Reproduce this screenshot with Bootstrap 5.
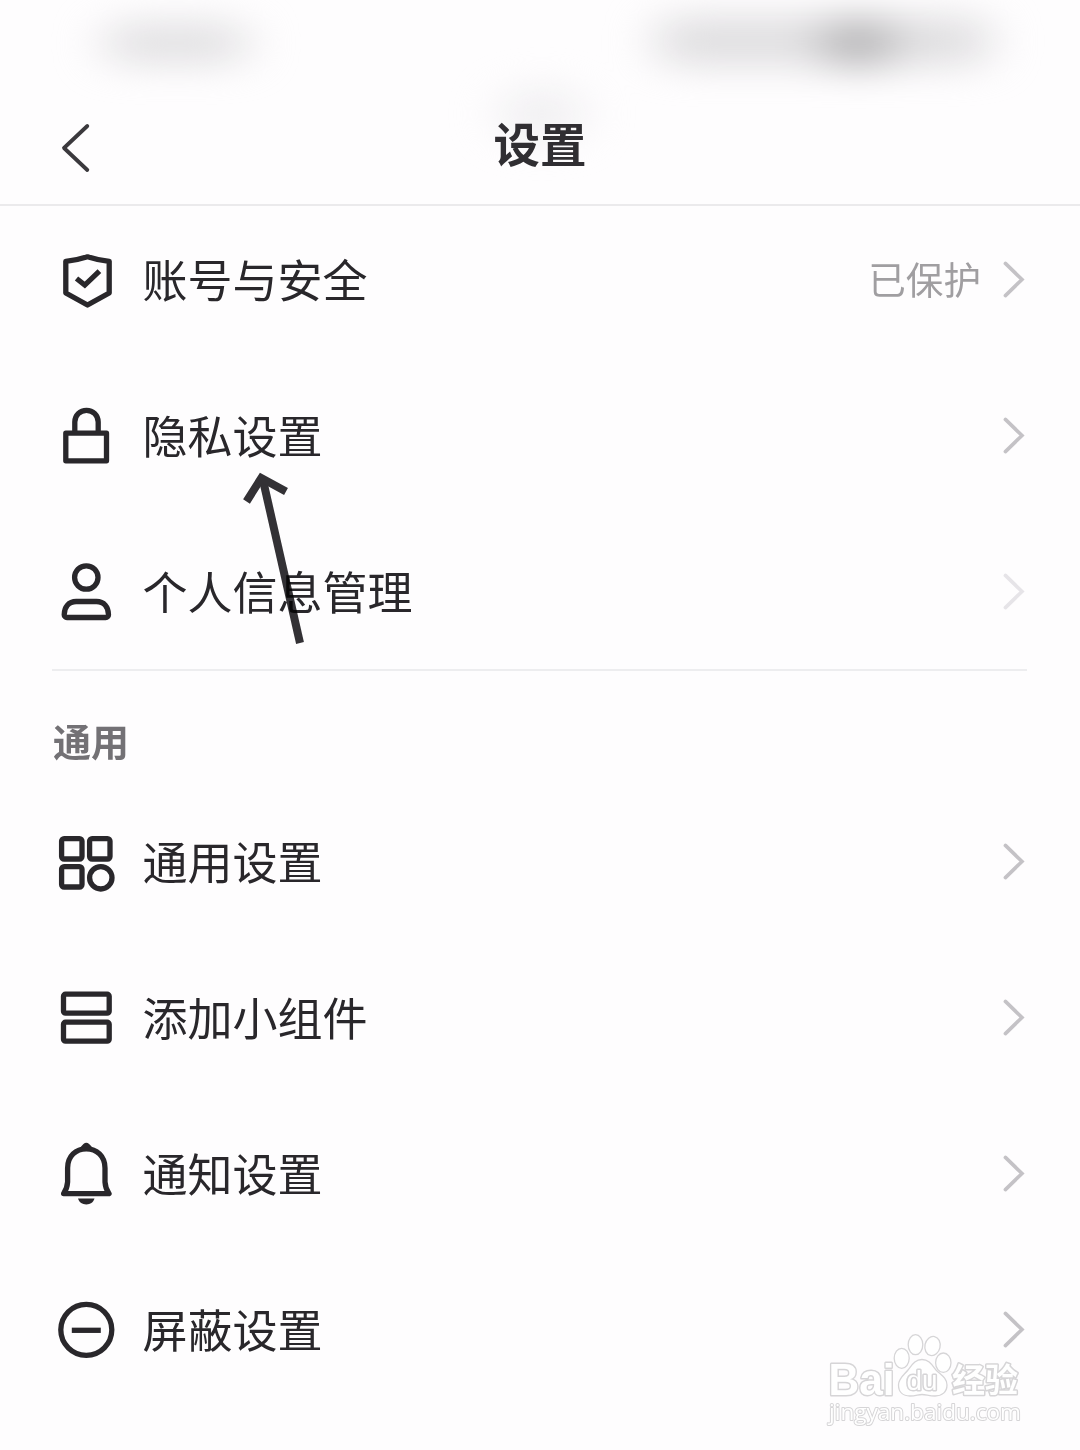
<!DOCTYPE html>
<html lang="zh-CN">
<head>
<meta charset="utf-8">
<meta name="viewport" content="width=device-width, initial-scale=1">
<title>设置</title>
<link rel="stylesheet" href="https://cdn.jsdelivr.net/npm/bootstrap@5.3.0/dist/css/bootstrap.min.css">
<style>
body{background:#fefdfe;color:#29272b;font-family:"Noto Sans CJK SC",sans-serif;overflow:hidden}
.screen{width:1080px;height:1450px}
.topbar{height:206px;border-bottom:2px solid #ebeaec;padding:87px 56px 0}
.topbar h1{font-size:46.5px;font-weight:700;line-height:110px;color:#302e32;margin:0}
.side{width:60px}
.haze{pointer-events:none;left:0;top:0}
.settings-list{--bs-list-group-bg:transparent;--bs-list-group-border-width:0;--bs-list-group-border-radius:0}
.settings-list .list-group-item{height:156px;padding:0 54px 0 56px;color:#29272b;border:0}
.first-group{margin-top:-4px}
.row-label{font-size:45px;line-height:60px;margin-left:26.5px;padding-bottom:3px}
.row-value{font-size:37.6px;line-height:56px;color:#a09ea1;margin-right:21px;padding-bottom:5px}
.glyph{width:60px;height:60px;fill:none;stroke:#29272b;stroke-width:5.3;stroke-linejoin:round;overflow:visible}
.chev{width:24px;height:40px;fill:none;stroke:#c4c2c6;stroke-width:3.6;stroke-linecap:round}
.chev.pale{stroke:#e6e4e8}
.divider{height:2px;margin:-1px 53px -1px 52px;background:#ededef}
.group-title{height:114px;padding:0 53px;font-size:38px;font-weight:700;line-height:139px;color:#737175;margin:0}
.pointer{left:230px;top:460px;mix-blend-mode:multiply}
.watermark{left:820px;top:1325px}
</style>
<script src="https://cdn.jsdelivr.net/npm/bootstrap@5.3.0/dist/js/bootstrap.bundle.min.js"></script>
</head>
<body>
<svg class="d-none"><symbol id="chevron" viewBox="0 0 24 40"><path d="M3.4 3.4 20 19.5 3.4 35.6"/></symbol></svg>
<main class="screen position-relative overflow-hidden">
  <svg class="haze position-absolute" width="1080" height="205" aria-hidden="true">
    <defs><filter id="soft" x="-50%" y="-150%" width="200%" height="400%" color-interpolation-filters="sRGB"><feGaussianBlur stdDeviation="24 17"/></filter></defs>
    <g filter="url(#soft)">
      <rect x="106" y="22" width="140" height="42" rx="18" fill="#e2e1e3"/>
      <rect x="658" y="16" width="330" height="50" rx="18" fill="#e0dfe1"/>
      <rect x="823" y="18" width="70" height="50" rx="18" fill="#b9b8ba"/>
      <ellipse cx="542" cy="114" rx="40" ry="28" fill="#f0eff1"/>
    </g>
  </svg>
  <header class="topbar d-flex justify-content-between position-relative">
    <div class="side"><svg width="40" height="120" fill="none" stroke="#3b393d" stroke-width="3.8" stroke-linecap="round" stroke-linejoin="round"><path d="M31.3 39 8 61 31.3 83"/></svg></div>
    <h1>设置</h1>
    <div class="side"></div>
  </header>

  <div class="list-group settings-list first-group position-relative">
    <div class="list-group-item d-flex align-items-center">
      <svg class="glyph"><path d="M9.8 11.3Q22 10 31.5 6.8 41 10 53.2 11.3V43L31.5 55 9.8 43Z"/><path d="m20.5 28.500 8.300 6.600L43.400 21.200" stroke-linejoin="miter"/></svg>
      <span class="row-label">账号与安全</span><span class="row-value ms-auto">已保护</span><svg class="chev"><use href="#chevron"/></svg>
    </div>
    <div class="list-group-item d-flex align-items-center">
      <svg class="glyph"><rect x="9.8" y="27.2" width="40.7" height="27.6"/><path d="M18.8 27V16a11.7 11.7 0 0 1 23.4 0v11"/></svg>
      <span class="row-label">隐私设置</span><svg class="chev ms-auto"><use href="#chevron"/></svg>
    </div>
    <div class="list-group-item d-flex align-items-center">
      <svg class="glyph"><circle cx="30.3" cy="15.5" r="11.7"/><path d="M11 55.5H49.7a2.8 2.8 0 0 0 2.8-2.8C52.5 45 48 39.5 40.5 39.5H20.2C12.7 39.5 8.2 45 8.2 52.7A2.8 2.8 0 0 0 11 55.5Z"/></svg>
      <span class="row-label">个人信息管理</span><svg class="chev pale ms-auto"><use href="#chevron"/></svg>
    </div>
  </div>
  <div class="divider"></div>

  <h2 class="group-title">通用</h2>
  <div class="list-group settings-list">
    <div class="list-group-item d-flex align-items-center">
      <svg class="glyph"><rect x="5.6" y="6.6" width="20.4" height="20.4" rx="2.5"/><rect x="33.6" y="6.6" width="20.4" height="20.4" rx="2.5"/><rect x="5.6" y="34.6" width="20.4" height="20.4" rx="2.5"/><circle cx="44.8" cy="45.8" r="11.2"/></svg>
      <span class="row-label">通用设置</span><svg class="chev ms-auto"><use href="#chevron"/></svg>
    </div>
    <div class="list-group-item d-flex align-items-center">
      <svg class="glyph"><rect x="7.5" y="6.2" width="45.7" height="19" rx="2"/><rect x="7.5" y="34.2" width="45.7" height="19" rx="2"/></svg>
      <span class="row-label">添加小组件</span><svg class="chev ms-auto"><use href="#chevron"/></svg>
    </div>
    <div class="list-group-item d-flex align-items-center">
      <svg class="glyph"><path d="M11.600 24C11.600 12 20 4.800 30.300 4.800S49 12 49 24V38Q49.500 45 53 49.600H7.600Q11.100 45 11.600 38Z"/><path d="M24.500 3.500Q27.500-1.300 30.300-1.300 33.100-1.300 36.100 3.500Z" fill="#29272b" stroke="none"/><path d="M22 54.500H38.500C37 58.600 34.500 60.400 30.300 60.400S23.500 58.600 22 54.500Z" fill="#29272b" stroke="none"/></svg>
      <span class="row-label">通知设置</span><svg class="chev ms-auto"><use href="#chevron"/></svg>
    </div>
    <div class="list-group-item d-flex align-items-center">
      <svg class="glyph"><circle cx="30.3" cy="29.8" r="25.5"/><path d="M15.8 30.3H44.8"/></svg>
      <span class="row-label">屏蔽设置</span><svg class="chev ms-auto"><use href="#chevron"/></svg>
    </div>
  </div>

  <svg class="pointer position-absolute" width="90" height="195" fill="none" stroke="#333135" stroke-width="8"><path d="M32.5 18 70 183"/><path d="M16.5 41.5 31.3 18 56 31.5"/></svg>

  <svg class="watermark position-absolute" width="215" height="110" fill="#fff" stroke="#d6d5d7" stroke-width="1.3" stroke-linejoin="round">
    <g stroke-width="3" paint-order="stroke">
      <text x="8.500" y="70" font-family="Liberation Sans,sans-serif" font-weight="700" font-size="45" textLength="66" lengthAdjust="spacingAndGlyphs">Bai</text>
      <text x="132" y="67" font-family="Noto Sans CJK SC,sans-serif" font-weight="700" font-size="33" textLength="66">经验</text>
      <text x="9" y="95" font-family="Open Sans,sans-serif" font-size="22.500" stroke-width="2" textLength="192" lengthAdjust="spacingAndGlyphs">jingyan.baidu.com</text>
    </g>
    <ellipse cx="81.700" cy="33.300" rx="7.500" ry="10"/><ellipse cx="95.500" cy="19.700" rx="7.300" ry="10"/><ellipse cx="112.500" cy="21" rx="7.600" ry="9.700" transform="rotate(12 112.5 21)"/><ellipse cx="123.300" cy="37.700" rx="7.700" ry="9.700"/>
    <path d="M102 34.500C109 34.500 112 40 116 45 121 50 127 53 127 60 127 67 122 71 115 71 109 71 106 69.500 102 69.500S96 71 90 71C83 71 78.500 67 78.500 60 78.500 53 84 50 88 45 92 40 95 34.500 102 34.500Z"/>
    <text x="86.500" y="65" font-family="Liberation Sans,sans-serif" font-size="27" textLength="31" stroke-width="3" paint-order="stroke" lengthAdjust="spacingAndGlyphs">du</text>
  </svg>
</main>
</body>
</html>
